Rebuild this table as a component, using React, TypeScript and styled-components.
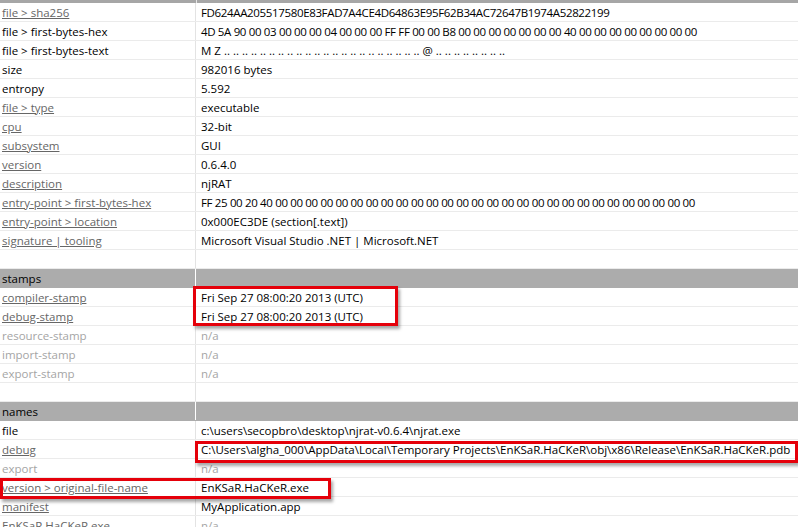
import React from "react";
import styled, { createGlobalStyle, css } from "styled-components";

const GlobalStyle = createGlobalStyle`
  html, body { margin: 0; padding: 0; background: #ffffff; }
  body { font-family: "Open Sans", "Noto Sans", sans-serif; font-size: 11.5px; color: #000; }
`;

type Tone = "plain" | "link" | "muted";

const Page = styled.div`
  position: relative;
  width: 798px;
  height: 527px;
  overflow: hidden;
  background: #fff;
`;

const TopStrip = styled.div`
  display: grid;
  grid-template-columns: 196px 1px 1fr;
  height: 3px;
  background: #a6a6a6;
`;

const StripGap = styled.div`
  grid-column: 2;
  background: #e6e6e6;
`;

const Table = styled.div`
  display: flex;
  flex-direction: column;
`;

const Row = styled.div<{ $section?: boolean }>`
  display: grid;
  grid-template-columns: 196px 1fr;
  height: 18px;
  border-bottom: 1px solid #ebebeb;
  background: ${(p) => (p.$section ? "#acacac" : "#fff")};
  ${(p) =>
    p.$section &&
    css`
      border-bottom-color: #acacac;
    `}
`;

const LabelCell = styled.div<{ $tone: Tone; $section?: boolean }>`
  display: flex;
  align-items: center;
  padding-left: 2px;
  border-right: 1px solid ${(p) => (p.$section ? "#ffffff" : "#e3e3e3")};
  white-space: nowrap;
  overflow: hidden;
  color: ${(p) => (p.$tone === "link" ? "#666666" : p.$tone === "muted" ? "#a5a5a5" : "#000")};
  text-decoration: ${(p) => (p.$tone === "link" ? "underline" : "none")};
  text-underline-offset: 1px;
`;

const ValueCell = styled.div<{ $muted?: boolean; $dense?: boolean }>`
  display: flex;
  align-items: center;
  padding-left: 5px;
  white-space: pre;
  overflow: hidden;
  color: ${(p) => (p.$muted ? "#a5a5a5" : "#000")};
  letter-spacing: ${(p) => (p.$dense ? "-0.35px" : "normal")};
`;

const Highlight = styled.div`
  position: absolute;
  border: 3px solid #e5000a;
  box-sizing: border-box;
  box-shadow: 2px 3px 3px rgba(0, 0, 0, 0.35);
  pointer-events: none;
`;

type Item =
  | { kind: "row"; label: string; value: string; tone?: Tone; muted?: boolean; dense?: boolean }
  | { kind: "section"; label: string }
  | { kind: "blank" };

const zeros = (n: number) => Array(n).fill("00").join(" ");
const pairs = (n: number) => Array(n).fill("..").join(" ");

const items: Item[] = [
  {
    kind: "row",
    label: "file > sha256",
    tone: "link",
    dense: true,
    value: "FD624AA205517580E83FAD7A4CE4D64863E95F62B34AC72647B1974A52822199",
  },
  {
    kind: "row",
    label: "file > first-bytes-hex",
    dense: true,
    value: "4D 5A 90 00 03 00 00 00 04 00 00 00 FF FF 00 00 B8 " + zeros(7) + " 40 " + zeros(8),
  },
  { kind: "row", label: "file > first-bytes-text", value: "M Z " + pairs(22) + " @ " + pairs(8) },
  { kind: "row", label: "size", value: "982016 bytes" },
  { kind: "row", label: "entropy", value: "5.592" },
  { kind: "row", label: "file > type", tone: "link", value: "executable" },
  { kind: "row", label: "cpu", tone: "link", value: "32-bit" },
  { kind: "row", label: "subsystem", tone: "link", value: "GUI" },
  { kind: "row", label: "version", tone: "link", value: "0.6.4.0" },
  { kind: "row", label: "description", tone: "link", value: "njRAT" },
  { kind: "row", label: "entry-point > first-bytes-hex", tone: "link", dense: true, value: "FF 25 00 20 40 " + zeros(28) },
  { kind: "row", label: "entry-point > location", tone: "link", value: "0x000EC3DE (section[.text])" },
  { kind: "row", label: "signature | tooling", tone: "link", value: "Microsoft Visual Studio .NET | Microsoft.NET" },
  { kind: "blank" },
  { kind: "section", label: "stamps" },
  { kind: "row", label: "compiler-stamp", tone: "link", value: "Fri Sep 27 08:00:20 2013 (UTC)" },
  { kind: "row", label: "debug-stamp", tone: "link", value: "Fri Sep 27 08:00:20 2013 (UTC)" },
  { kind: "row", label: "resource-stamp", tone: "muted", value: "n/a", muted: true },
  { kind: "row", label: "import-stamp", tone: "muted", value: "n/a", muted: true },
  { kind: "row", label: "export-stamp", tone: "muted", value: "n/a", muted: true },
  { kind: "blank" },
  { kind: "section", label: "names" },
  { kind: "row", label: "file", value: "c:\\users\\secopbro\\desktop\\njrat-v0.6.4\\njrat.exe" },
  {
    kind: "row",
    label: "debug",
    tone: "link",
    value: "C:\\Users\\algha_000\\AppData\\Local\\Temporary Projects\\EnKSaR.HaCKeR\\obj\\x86\\Release\\EnKSaR.HaCKeR.pdb",
  },
  { kind: "row", label: "export", tone: "muted", value: "n/a", muted: true },
  { kind: "row", label: "version > original-file-name", tone: "link", value: "EnKSaR.HaCKeR.exe" },
  { kind: "row", label: "manifest", tone: "link", value: "MyApplication.app" },
  { kind: "row", label: "EnKSaR.HaCKeR.exe", tone: "link", value: "n/a", muted: true },
];

const boxes = [
  { left: 193, top: 286, width: 205, height: 40 },
  { left: 195, top: 441, width: 603, height: 22 },
  { left: 0, top: 478, width: 331, height: 21 },
];

export default function App() {
  return (
    <Page>
      <GlobalStyle />
      <TopStrip>
        <StripGap />
      </TopStrip>
      <Table>
        {items.map((it, i) => {
          if (it.kind === "section")
            return (
              <Row key={i} $section>
                <LabelCell $tone="plain" $section>
                  {it.label}
                </LabelCell>
                <ValueCell />
              </Row>
            );
          if (it.kind === "blank")
            return (
              <Row key={i}>
                <LabelCell $tone="plain" />
                <ValueCell />
              </Row>
            );
          return (
            <Row key={i}>
              <LabelCell $tone={it.tone ?? "plain"}>{it.label}</LabelCell>
              <ValueCell $muted={it.muted} $dense={it.dense}>
                {it.value}
              </ValueCell>
            </Row>
          );
        })}
      </Table>
      {boxes.map((b, i) => (
        <Highlight key={i} style={{ left: b.left, top: b.top, width: b.width, height: b.height }} />
      ))}
    </Page>
  );
}
